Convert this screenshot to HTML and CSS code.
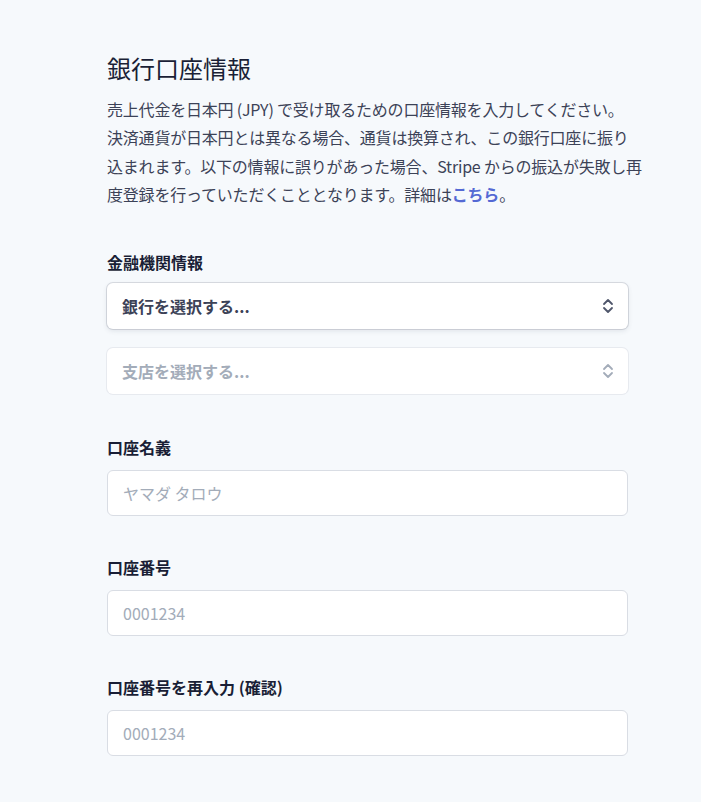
FILE: index.html
```html
<!DOCTYPE html>
<html lang="ja">
<head>
  <meta charset="UTF-8">
  <meta name="viewport" content="width=device-width, initial-scale=1.0">
  <title>銀行口座情報</title>
  <link rel="stylesheet" href="styles.css">
</head>
<body>
  <div class="container">
    <h1>銀行口座情報</h1>
    <p class="intro">売上代金を日本円 (JPY) で受け取るための口座情報を入力してください。<br>決済通貨が日本円とは異なる場合、通貨は換算され、この銀行口座に振り<br>込まれます。以下の情報に誤りがあった場合、Stripe からの振込が失敗し再<br>度登録を行っていただくこととなります。詳細は<a href="#">こちら</a>。</p>

    <div class="field">
      <label class="field-label">金融機関情報</label>
      <div class="select select-active">
        <span>銀行を選択する...</span>
        <svg class="chevrons" width="12" height="16" viewBox="0 0 12 16"><path d="M2 6l4-4 4 4M2 10l4 4 4-4" fill="none" stroke="currentColor" stroke-width="1.8" stroke-linecap="round" stroke-linejoin="round"/></svg>
      </div>
      <div class="select select-disabled">
        <span>支店を選択する...</span>
        <svg class="chevrons" width="12" height="16" viewBox="0 0 12 16"><path d="M2 6l4-4 4 4M2 10l4 4 4-4" fill="none" stroke="currentColor" stroke-width="1.8" stroke-linecap="round" stroke-linejoin="round"/></svg>
      </div>
    </div>

    <div class="field field-text">
      <label class="field-label" for="holder">口座名義</label>
      <input type="text" id="holder" placeholder="ヤマダ タロウ">
    </div>

    <div class="field field-text">
      <label class="field-label" for="account">口座番号</label>
      <input type="text" id="account" placeholder="0001234">
    </div>

    <div class="field field-text">
      <label class="field-label" for="account-confirm">口座番号を再入力 (確認)</label>
      <input type="text" id="account-confirm" placeholder="0001234">
    </div>
  </div>
</body>
</html>
```

FILE: styles.css
```css
body {
  margin: 0;
  padding: 0;
  background: #f6f9fc;
  font-family: "Noto Sans CJK JP", "Noto Sans", sans-serif;
  color: #3c4257;
}
.container {
  width: 521px;
  margin-left: 107px;
  padding-top: 52px;
}
h1 {
  font-size: 24px;
  line-height: 32px;
  font-weight: 400;
  color: #1a1f36;
  margin: 0 0 11px;
}
.intro {
  font-size: 16px;
  line-height: 28.3px;
  margin: 0 0 42px;
  letter-spacing: -0.2px;
  white-space: nowrap;
}
.intro a {
  color: #5469d4;
  font-weight: 600;
  text-decoration: none;
}
.field {
  margin-bottom: 41px;
}
.field-text {
  margin-bottom: 39px;
}
.field-label {
  display: block;
  font-size: 16px;
  line-height: 24px;
  font-weight: 700;
  color: #1a1f36;
  margin-bottom: 9px;
}
.field-text .field-label {
  margin-bottom: 11px;
}
.select {
  display: flex;
  align-items: center;
  justify-content: space-between;
  height: 46px;
  padding: 0 14px 0 15px;
  box-sizing: border-box;
  background: #fff;
  border-radius: 6px;
  font-size: 16px;
  font-weight: 600;
}
.select-active {
  color: #3c4257;
  box-shadow: 0 0 0 1px rgba(60, 66, 87, 0.16), 0 2px 5px rgba(60, 66, 87, 0.12);
}
.select-disabled {
  margin-top: 19px;
  color: #a3acb9;
  box-shadow: 0 0 0 1px rgba(60, 66, 87, 0.08);
}
.select-active .chevrons {
  color: #4f566b;
}
input {
  display: block;
  width: 100%;
  height: 46px;
  box-sizing: border-box;
  padding: 0 15px;
  font-family: "Noto Sans CJK JP", "Noto Sans", sans-serif;
  font-size: 16px;
  color: #3c4257;
  background: #fff;
  border: 1px solid #d9dde4;
  border-radius: 6px;
  outline: none;
}
input::placeholder {
  color: #a3acb9;
}
```
